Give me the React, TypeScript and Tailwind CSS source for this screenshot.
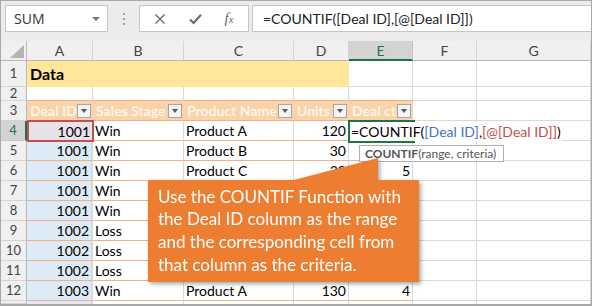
import React from 'react';

const COL_W = ['w-[66px]', 'w-[91px]', 'w-[110px]', 'w-[55px]', 'w-[64px]', 'w-[64px]', 'w-[114px]'];
const LETTERS = ['A', 'B', 'C', 'D', 'E', 'F', 'G'];

const HEADERS = ['Deal ID', 'Sales Stage', 'Product Name', 'Units', 'Deal ct'];

// rows 4..12 of the table (cells under the callout are left empty)
const DATA: string[][] = [
  ['1001', 'Win', 'Product A', '120', ''],
  ['1001', 'Win', 'Product B', '30', ''],
  ['1001', 'Win', 'Product C', '30', '5'],
  ['1001', 'Win', '', '', ''],
  ['1001', 'Win', '', '', ''],
  ['1002', 'Loss', '', '', ''],
  ['1002', 'Loss', '', '', ''],
  ['1002', 'Loss', '', '', ''],
  ['1003', 'Win', 'Product A', '130', '4'],
];

const FONT = "font-['Lato','Noto_Sans',sans-serif]";

function FilterButton() {
  return (
    <div className="shrink-0 w-[14px] h-[14px] mr-[1px] border border-[#a6a6a6] bg-[#f3f3f3] flex items-center justify-center">
      <div className="w-0 h-0 border-l-[3.5px] border-r-[3.5px] border-t-[4px] border-l-transparent border-r-transparent border-t-[#5a5a5a]" />
    </div>
  );
}

function cellClass(row: number, col: number) {
  const inTable = col <= 4;
  let c = 'shrink-0 h-full border-r border-b flex items-center overflow-hidden whitespace-nowrap ';
  if (row === 1) {
    c += col <= 3 ? 'bg-[#FFE699] border-[#FFE699] ' : 'bg-white border-[#d9d9d9] ';
  } else if (row === 2) {
    c += inTable ? 'bg-white border-r-[#d9d9d9] border-b-[#F4B084] ' : 'bg-white border-[#d9d9d9] ';
  } else if (row === 3) {
    c += inTable ? 'bg-[#FAD3AA] border-r-[#FAD3AA] border-b-[#F4B084] ' : 'bg-white border-[#d9d9d9] ';
    if (col === 4) c += 'border-r-[#F4B084] ';
  } else {
    if (!inTable) c += 'bg-white border-[#d9d9d9] ';
    else {
      c += 'border-r-[#d9d9d9] border-b-[#F4B084] ';
      c += col === 0 ? 'bg-[#DDEBF7] border-r-2 border-r-[#4472C4] ' : 'bg-white ';
      if (col === 4) c += 'border-r-[#F4B084] ';
    }
    if (row === 13) c += 'border-b-0 ';
  }
  return c;
}

function rowHeight(row: number) {
  if (row === 1) return 'h-[26px]';
  if (row === 2) return 'h-[14px]';
  if (row === 13) return 'h-[3px]';
  return 'h-[20px]';
}

function SheetRow({ row }: { row: number }) {
  const active = row === 4;
  return (
    <div className={`flex ${rowHeight(row)}`}>
      <div
        className={`shrink-0 w-[26px] h-full border-b flex items-center justify-center text-[13px] leading-none ${
          active
            ? 'bg-[#d3d3d3] text-[#217346] border-r-2 border-r-[#217346] border-b-[#c6c6c6]'
            : 'bg-[#f0f0f0] text-[#444] border-r border-r-[#b8b8b8] border-b-[#d4d4d4]'
        }`}
      >
        {row <= 12 ? row : null}
      </div>
      {LETTERS.map((_, col) => {
        let content: React.ReactNode = null;
        if (row === 1 && col === 0) {
          content = <span className="pl-[3px] text-[16px] font-bold text-black">Data</span>;
        } else if (row === 3 && col <= 4) {
          content = (
            <>
              <span className="flex-1 overflow-hidden pl-[3px] text-[14px] font-bold text-[#FFF4E6]">{HEADERS[col]}</span>
              <FilterButton />
            </>
          );
        } else if (row >= 4 && row <= 12 && col <= 4) {
          const v = DATA[row - 4][col];
          const numeric = col === 0 || col >= 3;
          content = v ? (
            <span className={`w-full text-[14px] text-black ${numeric ? 'text-right pr-[2px]' : 'text-left pl-[2px]'}`}>{v}</span>
          ) : null;
        }
        return (
          <div key={col} className={`${cellClass(row, col)} ${COL_W[col]}`}>
            {content}
          </div>
        );
      })}
    </div>
  );
}

export default function App() {
  return (
    <div className={`relative w-[592px] h-[306px] overflow-hidden bg-[#ececec] border border-b-2 border-[#a8a8a8] ${FONT}`}>
      {/* formula bar */}
      <div className="flex items-start h-[40px] pt-[4px] pl-[4px]">
        <div className="w-[103px] h-[27px] bg-white border border-[#c6c6c6] flex items-center justify-between pl-[8px] pr-[7px]">
          <span className="text-[14px] text-[#333] font-['Open_Sans',sans-serif]">SUM</span>
          <div className="w-0 h-0 border-l-[4px] border-r-[4px] border-t-[4px] border-l-transparent border-r-transparent border-t-[#777]" />
        </div>
        <div className="w-[31px] h-[27px] flex flex-col items-center justify-center gap-[3px]">
          <div className="w-[2px] h-[2px] bg-[#a0a0a0]" />
          <div className="w-[2px] h-[2px] bg-[#a0a0a0]" />
          <div className="w-[2px] h-[2px] bg-[#a0a0a0]" />
        </div>
        <div className="w-[110px] h-[27px] bg-white border border-[#c6c6c6] flex items-center">
          <div className="w-[38px] flex justify-center pl-[2px]">
            <svg width="12" height="12" viewBox="0 0 12 12">
              <path d="M1.5 1.5 L10.5 10.5 M10.5 1.5 L1.5 10.5" stroke="#6b6b6b" strokeWidth="1.4" fill="none" />
            </svg>
          </div>
          <div className="w-[34px] flex justify-center">
            <svg width="13" height="12" viewBox="0 0 13 12">
              <path d="M1 6.5 L4.6 10 L12 1.8" stroke="#6b6b6b" strokeWidth="2.2" fill="none" />
            </svg>
          </div>
          <div className="w-[34px] flex justify-center">
            <span className="font-['Liberation_Serif',serif] italic text-[15px] text-[#6b6b6b] leading-none">
              f<span className="text-[11px]">x</span>
            </span>
          </div>
        </div>
        <div className="ml-[3px] flex-1 h-[27px] bg-white border-y border-l border-[#c6c6c6] flex items-center pl-[10px]">
          <span className="text-[14px] text-[#222]">=COUNTIF([Deal ID],[@[Deal ID]])</span>
        </div>
      </div>

      {/* column headers */}
      <div className="flex h-[20px]">
        <div className="shrink-0 w-[26px] h-full bg-[#f0f0f0] border-r border-b border-[#b8b8b8] flex items-end justify-end p-[2px]">
          <svg width="14" height="13" viewBox="0 0 14 13">
            <polygon points="0,13 14,13 14,0" fill="#b4b4b4" />
          </svg>
        </div>
        {LETTERS.map((l, i) => (
          <div
            key={l}
            className={`shrink-0 ${COL_W[i]} h-full border-r flex items-center justify-center text-[14px] ${
              i === 4
                ? 'bg-[#d3d3d3] text-[#217346] border-b-2 border-b-[#217346] border-r-[#c6c6c6]'
                : 'bg-[#f0f0f0] text-[#444] border-b border-b-[#b8b8b8] border-r-[#d4d4d4]'
            }`}
          >
            {l}
          </div>
        ))}
      </div>

      {/* grid */}
      {[1, 2, 3, 4, 5, 6, 7, 8, 9, 10, 11, 12, 13].map(r => (
        <SheetRow key={r} row={r} />
      ))}

      {/* range reference border on A4 */}
      <div className="absolute left-[26px] top-[119px] w-[67px] h-[22px] border-2 border-[#C0504D] bg-[#e8e1ea] flex items-center justify-end pr-[2px]">
        <span className="text-[14px] text-black">1001</span>
      </div>

      {/* active cell in edit mode */}
      <div className="absolute left-[347px] top-[119px] w-[67px] h-[23px] border-2 border-[#217346]" />
      <div className="absolute left-[349px] top-[121px] h-[19px] w-[212px] bg-white flex items-center pl-[1px]">
        <span className="text-[14px] text-black whitespace-nowrap">
          =COUNTIF(<span className="text-[#4472C4]">[Deal ID]</span>,<span className="text-[#C0504D]">[@[Deal ID]]</span>)
        </span>
      </div>

      {/* function tooltip */}
      <div className="absolute left-[358px] top-[144px] w-[145px] h-[17px] bg-white border border-[#b0b0b0] flex items-center pl-[5px] text-[12px] text-[#555] whitespace-nowrap">
        <span className="font-bold">COUNTIF</span>(range, criteria)
      </div>

      {/* callout */}
      <div className="absolute left-[147px] top-[179px] w-[271px] h-[102px] drop-shadow-[2px_2px_2px_rgba(0,0,0,0.35)]">
        <svg className="absolute left-[142px] top-[-22px]" width="89" height="23" viewBox="0 0 89 23">
          <polygon points="0,23 88,0 88,23" fill="#ED7D31" />
        </svg>
        <div className="w-full h-full bg-[#ED7D31] flex flex-col justify-center pl-[10px] text-[17px] leading-[22.7px] text-white">
          <span>Use the COUNTIF Function with</span>
          <span>the Deal ID column as the range</span>
          <span>and the corresponding cell from</span>
          <span>that column as the criteria.</span>
        </div>
      </div>
    </div>
  );
}
